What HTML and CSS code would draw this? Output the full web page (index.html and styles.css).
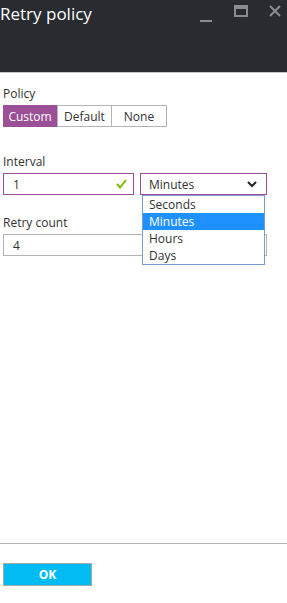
FILE: index.html
```html
<!DOCTYPE html>
<html lang="en">
<head>
  <meta charset="UTF-8">
  <title>Retry policy</title>
  <link rel="stylesheet" href="styles.css">
</head>
<body>
  <div class="blade">
    <header class="blade-header">
      <h1>Retry policy</h1>
      <div class="window-controls">
        <svg class="ctl ctl-min" width="12" height="12" viewBox="0 0 12 12"><rect x="0" y="9" width="12" height="2" fill="#8a8d90"/></svg>
        <svg class="ctl ctl-max" width="14" height="12" viewBox="0 0 14 12"><rect x="1" y="1" width="12" height="10" fill="none" stroke="#8a8d90" stroke-width="2"/><rect x="1" y="1" width="12" height="3" fill="#8a8d90"/></svg>
        <svg class="ctl ctl-close" width="12" height="12" viewBox="0 0 12 12"><path d="M1 1 L11 11 M11 1 L1 11" stroke="#8a8d90" stroke-width="2"/></svg>
      </div>
    </header>

    <main class="blade-content">
      <!-- Policy -->
      <div class="field">
        <label class="field-label">Policy</label>
        <div class="toggle-group">
          <button class="toggle active">Custom</button>
          <button class="toggle">Default</button>
          <button class="toggle">None</button>
        </div>
      </div>

      <!-- Interval -->
      <div class="field">
        <label class="field-label">Interval</label>
        <div class="interval-row">
          <div class="text-input valid">
            <span>1</span>
            <svg class="check" width="11" height="10" viewBox="0 0 11 10"><path d="M1 5 L4 8.5 L10 1" fill="none" stroke="#7fba00" stroke-width="2"/></svg>
          </div>
          <div class="select">
            <span>Minutes</span>
            <svg class="chevron" width="10" height="7" viewBox="0 0 10 7"><path d="M1 1 L5 5 L9 1" fill="none" stroke="#222" stroke-width="2"/></svg>
            <ul class="select-list">
              <li>Seconds</li>
              <li class="selected">Minutes</li>
              <li>Hours</li>
              <li>Days</li>
            </ul>
          </div>
        </div>
      </div>

      <!-- Retry count -->
      <div class="field">
        <label class="field-label">Retry count</label>
        <div class="text-input plain"><span>4</span></div>
      </div>
    </main>

    <footer class="blade-footer">
      <button class="ok-button">OK</button>
    </footer>
  </div>
</body>
</html>
```

FILE: styles.css
```css
body {
  margin: 0;
  padding: 0;
  font-family: "Open Sans", "Noto Sans", sans-serif;
  font-size: 12px;
  color: #323232;
  background: #fff;
}
.blade {
  display: flex;
  flex-direction: column;
  height: 603px;
}
.blade-header {
  height: 72px;
  background: #282c30;
  border-bottom: 1px solid #c8c8c8;
  display: flex;
  justify-content: space-between;
  align-items: flex-start;
  flex-shrink: 0;
}
.blade-header h1 {
  margin: 0;
  padding: 1px 0 0 0;
  font-size: 17px;
  font-weight: 400;
  color: #fff;
  line-height: 26px;
}
.window-controls {
  display: flex;
  align-items: flex-start;
  padding-top: 5px;
  margin-right: 6px;
}
.ctl-min {
  margin-top: 6px;
  margin-right: 22px;
}
.ctl-max {
  margin-right: 21px;
}
.ctl-close {
  margin-top: 0;
}
.blade-content {
  flex: 1;
  padding: 13px 3px 0 3px;
}
.field {
  margin-bottom: 10px;
}
.field-label {
  display: block;
  line-height: 15px;
  margin-bottom: 4px;
}
.toggle-group {
  display: flex;
}
.toggle {
  font-family: inherit;
  font-size: 12px;
  color: #323232;
  background: #fff;
  border: 1px solid #b4b4b4;
  height: 22px;
  padding: 0;
  margin: 0;
  width: 55px;
}
.toggle:first-child {
  width: 54px;
}
.toggle:last-child {
  border-left: none;
}
.toggle.active {
  background: #9b4f96;
  border-color: #9b4f96;
  color: #fff;
}
.field:nth-child(2) {
  margin-top: 27px;
  margin-bottom: 20px;
}
.interval-row {
  display: flex;
  gap: 6px;
}
.text-input {
  box-sizing: border-box;
  height: 22px;
  border: 1px solid #b4b4b4;
  display: flex;
  align-items: center;
  justify-content: space-between;
  padding: 0 6px 0 9px;
}
.text-input.valid {
  width: 131px;
  border-color: #9b4f96;
}
.text-input.plain {
  width: 264px;
}
.select {
  position: relative;
  box-sizing: border-box;
  width: 127px;
  height: 22px;
  border: 1px solid #9b4f96;
  display: flex;
  align-items: center;
  justify-content: space-between;
  padding: 0 9px 0 8px;
}
.select-list {
  position: absolute;
  top: 21px;
  left: 1px;
  width: 123px;
  margin: 0;
  padding: 0;
  list-style: none;
  background: #fff;
  border: 1px solid #7a9cd3;
  box-sizing: border-box;
  z-index: 2;
}
.select-list li {
  height: 17px;
  line-height: 17px;
  padding-left: 6px;
}
.select-list li.selected {
  background: #1e90ff;
  color: #fff;
}
.blade-footer {
  border-top: 1px solid #b4b4b4;
  height: 60px;
  padding: 19px 3px 0 3px;
  box-sizing: border-box;
  flex-shrink: 0;
}
.ok-button {
  width: 89px;
  height: 23px;
  background: #00bcf2;
  border: 1px solid #a8a8a8;
  color: #fff;
  font-family: inherit;
  font-size: 12px;
  font-weight: 700;
  padding: 0;
}
```
